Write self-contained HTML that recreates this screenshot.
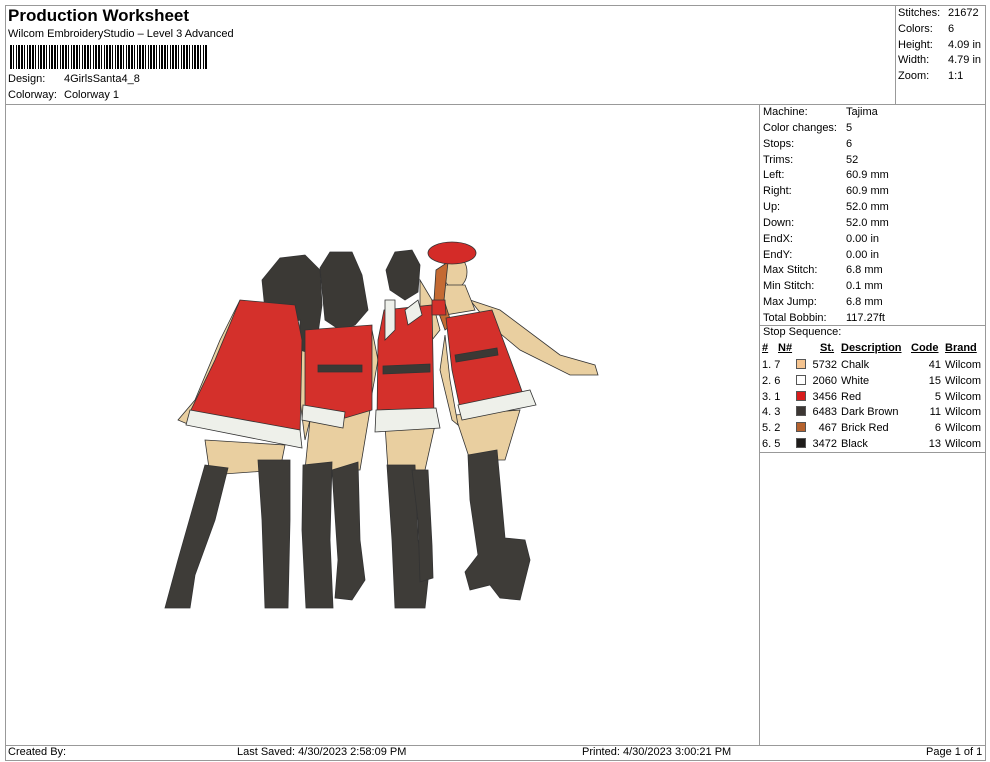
<!DOCTYPE html>
<html><head><meta charset="utf-8"><style>
*{margin:0;padding:0;box-sizing:border-box}
body{width:990px;height:762px;background:#fff;font-family:"Liberation Sans",Arial,sans-serif;color:#000;position:relative;overflow:hidden;font-size:11px}
.a{position:absolute;white-space:nowrap}
.box{position:absolute;border:1px solid #999}
.ft{font-family:"Liberation Sans Narrow","Liberation Sans",sans-serif;font-size:11px}
.sw{display:inline-block;width:10px;height:10px;border:1px solid #555;vertical-align:-1px}
</style></head><body>
<div class="box" style="left:5px;top:5px;width:981px;height:100px"></div>
<div class="box" style="left:895px;top:5px;width:91px;height:100px"></div>
<div class="box" style="left:5px;top:104px;width:755px;height:642px"></div>
<div class="box" style="left:759px;top:104px;width:227px;height:642px"></div>
<div class="box" style="left:759px;top:325px;width:227px;height:128px"></div>
<div class="box" style="left:5px;top:745px;width:981px;height:16px"></div>

<div class="a" style="left:8px;top:6px;font-size:17px;font-weight:bold">Production Worksheet</div>
<div class="a" style="left:8px;top:28px">Wilcom EmbroideryStudio – Level 3 Advanced</div>
<div class="a" style="left:10px;top:45px;width:198px;height:24px;background:repeating-linear-gradient(90deg,#000 0 2px,#fff 2px 3px,#000 3px 4px,#fff 4px 6px,#000 6px 7px,#fff 7px 8px,#000 8px 10px,#fff 10px 11px)"></div>
<div class="a" style="left:8px;top:73px">Design:</div><div class="a" style="left:64px;top:73px">4GirlsSanta4_8</div>
<div class="a" style="left:8px;top:89px">Colorway:</div><div class="a" style="left:64px;top:89px">Colorway 1</div>

<div class="a" style="left:898px;top:6px;line-height:15.8px">Stitches:<br>Colors:<br>Height:<br>Width:<br>Zoom:</div>
<div class="a" style="left:948px;top:6px;line-height:15.8px">21672<br>6<br>4.09 in<br>4.79 in<br>1:1</div>

<div class="a" style="left:763px;top:105px;line-height:15.85px">Machine:<br>Color changes:<br>Stops:<br>Trims:<br>Left:<br>Right:<br>Up:<br>Down:<br>EndX:<br>EndY:<br>Max Stitch:<br>Min Stitch:<br>Max Jump:<br>Total Bobbin:</div>
<div class="a" style="left:846px;top:105px;line-height:15.85px">Tajima<br>5<br>6<br>52<br>60.9 mm<br>60.9 mm<br>52.0 mm<br>52.0 mm<br>0.00 in<br>0.00 in<br>6.8 mm<br>0.1 mm<br>6.8 mm<br>117.27ft</div>

<div class="a" style="left:763px;top:326px">Stop Sequence:</div>
<div class="a" style="left:762px;top:342px;font-weight:bold;text-decoration:underline">#</div>
<div class="a" style="left:778px;top:342px;font-weight:bold;text-decoration:underline">N#</div>
<div class="a" style="left:820px;top:342px;font-weight:bold;text-decoration:underline">St.</div>
<div class="a" style="left:841px;top:342px;font-weight:bold;text-decoration:underline">Description</div>
<div class="a" style="left:911px;top:342px;font-weight:bold;text-decoration:underline">Code</div>
<div class="a" style="left:945px;top:342px;font-weight:bold;text-decoration:underline">Brand</div>
<div class="a" style="left:762px;top:358px;line-height:15.8px">1. 7<br>2. 6<br>3. 1<br>4. 3<br>5. 2<br>6. 5</div>
<div class="a" style="left:796px;top:358px;line-height:15.8px"><span class="sw" style="background:#f5c490"></span><br><span class="sw" style="background:#fff"></span><br><span class="sw" style="background:#d81c1c"></span><br><span class="sw" style="background:#3c3633"></span><br><span class="sw" style="background:#b5622e"></span><br><span class="sw" style="background:#1e1c1a"></span></div>
<div class="a" style="left:805px;top:358px;width:32px;text-align:right;line-height:15.8px">5732<br>2060<br>3456<br>6483<br>467<br>3472</div>
<div class="a" style="left:841px;top:358px;line-height:15.8px">Chalk<br>White<br>Red<br>Dark Brown<br>Brick Red<br>Black</div>
<div class="a" style="left:910px;top:358px;width:31px;text-align:right;line-height:15.8px">41<br>15<br>5<br>11<br>6<br>13</div>
<div class="a" style="left:945px;top:358px;line-height:15.8px">Wilcom<br>Wilcom<br>Wilcom<br>Wilcom<br>Wilcom<br>Wilcom</div>

<div class="a ft" style="left:8px;top:746px">Created By:</div>
<div class="a ft" style="left:237px;top:746px">Last Saved: 4/30/2023 2:58:09 PM</div>
<div class="a ft" style="left:582px;top:746px">Printed: 4/30/2023 3:00:21 PM</div>
<div class="a ft" style="left:926px;top:746px">Page 1 of 1</div>

<svg class="a" style="left:0;top:0" width="990" height="762" viewBox="0 0 990 762">
<g stroke="#333" stroke-width="0.8">
<!-- skin -->
<polygon fill="#e9cfa0" points="240,300 220,340 195,400 178,420 190,425 215,375 235,340"/>
<polygon fill="#e9cfa0" points="205,440 285,445 280,470 210,475"/>
<polygon fill="#e9cfa0" points="300,330 300,400 305,440 310,420 308,360"/>
<polygon fill="#e9cfa0" points="310,420 370,410 360,470 305,470"/>
<polygon fill="#e9cfa0" points="372,330 362,390 370,405 378,360"/>
<polygon fill="#e9cfa0" points="385,425 435,425 425,470 388,470"/>
<polygon fill="#e9cfa0" points="420,280 432,300 440,330 432,340 420,315"/>
<polygon fill="#e9cfa0" points="455,415 520,410 505,460 470,460"/>
<polygon fill="#e9cfa0" points="470,300 500,310 560,355 595,365 598,375 570,375 520,350 490,325"/>
<polygon fill="#e9cfa0" points="445,335 450,380 458,425 452,420 440,370"/>
<ellipse fill="#e9cfa0" cx="298" cy="273" rx="11" ry="15"/>
<ellipse fill="#e9cfa0" cx="337" cy="278" rx="11" ry="15"/>
<ellipse fill="#e9cfa0" cx="402" cy="272" rx="11" ry="15"/>
<ellipse fill="#e9cfa0" cx="455" cy="272" rx="12" ry="16"/>
<polygon fill="#e9cfa0" points="440,285 465,285 475,310 445,315"/>
<!-- hair -->
<polygon fill="#3b3935" points="262,280 280,258 305,255 320,270 322,305 315,355 300,350 300,320 285,325 270,345 265,310"/>
<polygon fill="#3b3935" points="320,268 330,252 352,252 362,275 368,310 355,325 340,330 325,320"/>
<polygon fill="#3b3935" points="386,270 395,252 412,250 420,265 418,292 405,300 390,290"/>
<polygon fill="#c46a32" points="436,270 448,262 444,300 452,325 445,330 434,300"/>
<ellipse fill="#d42b28" cx="452" cy="253" rx="24" ry="11"/>
<!-- dresses -->
<polygon fill="#d4302b" points="240,300 295,305 302,340 300,435 190,412 215,360"/>
<polygon fill="#eef0ea" points="190,410 300,430 302,448 186,425"/>
<polygon fill="#d4302b" points="305,330 372,325 372,410 345,418 305,410"/>
<polygon fill="#eef0ea" points="303,405 345,412 343,428 302,420"/>
<polygon fill="#d4302b" points="384,310 432,305 434,415 377,420 378,340"/>
<polygon fill="#eef0ea" points="376,410 436,408 440,428 375,432"/>
<polygon fill="#eef0ea" points="385,300 395,300 395,330 385,340"/>
<polygon fill="#eef0ea" points="405,310 418,300 422,315 408,325"/>
<polygon fill="#d4302b" points="446,318 492,310 518,380 525,400 462,418 452,370"/>
<polygon fill="#eef0ea" points="458,405 530,390 536,405 462,420"/>
<polygon fill="#d4302b" points="432,300 445,300 446,315 432,315"/>
<!-- belts -->
<polygon fill="#3b3935" points="318,365 362,365 362,372 318,372"/>
<polygon fill="#3b3935" points="383,366 430,364 430,372 383,374"/>
<polygon fill="#3b3935" points="455,355 497,348 498,355 456,362"/>
<!-- boots -->
<polygon fill="#3e3c38" points="205,465 228,468 215,520 195,575 190,608 165,608 178,560"/>
<polygon fill="#3e3c38" points="258,460 290,460 290,520 288,608 265,608 262,520"/>
<polygon fill="#3e3c38" points="303,465 332,462 330,540 333,608 306,608 302,530"/>
<polygon fill="#3e3c38" points="332,470 358,462 360,540 365,580 352,600 335,598 338,560"/>
<polygon fill="#3e3c38" points="387,465 415,465 418,540 428,580 425,608 395,608 392,540"/>
<polygon fill="#3e3c38" points="412,470 428,470 432,545 433,578 420,582 418,520"/>
<polygon fill="#3e3c38" points="468,455 497,450 505,538 525,540 530,560 520,600 500,598 490,585 470,590 465,572 478,555 470,500"/>
</g>
</svg>
</body></html>
